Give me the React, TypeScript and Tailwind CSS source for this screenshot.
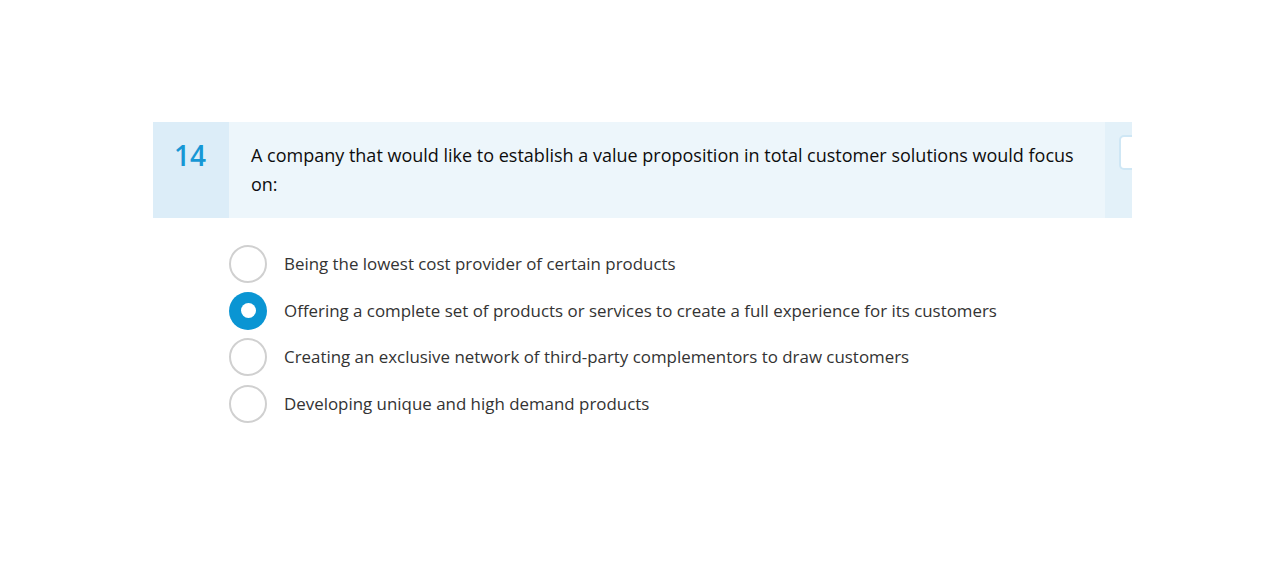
const options = [
  "Being the lowest cost provider of certain products",
  "Offering a complete set of products or services to create a full experience for its customers",
  "Creating an exclusive network of third-party complementors to draw customers",
  "Developing unique and high demand products",
];

export default function App() {
  const selected = 1;

  return (
    <div className="min-h-[588px] w-full bg-white pt-[122px] font-['Open_Sans',sans-serif]">
      <div className="ml-[153px] w-[979px]">
        <div className="flex h-[96px] overflow-hidden">
          <div className="w-[76px] shrink-0 bg-[#dcedf8] pl-[21px] pt-[15px] text-[28px] font-semibold leading-[36px] text-[#1697d5]">
            14
          </div>
          <div className="flex-1 bg-[#edf6fb] pl-[22px] pr-[20px] pt-[19px] text-[18px] leading-[29px] text-[#0d0d0d]">
            A company that would like to establish a value proposition in total customer solutions would focus on:
          </div>
          <div className="w-[27px] shrink-0 bg-[#e3f1f9] pl-[14px] pt-[13px]">
            <div className="h-[35px] w-[40px] rounded-[5px] border-2 border-[#cfe7f5] bg-white" />
          </div>
        </div>

        <div className="flex flex-col gap-[8.5px] pl-[76px] pt-[27px]">
          {options.map((text, i) => (
            <label key={i} className="flex items-center gap-[17px]">
              {i === selected ? (
                <span className="flex h-[38px] w-[38px] items-center justify-center rounded-full bg-[#0a95d3]">
                  <span className="h-[15px] w-[15px] rounded-full bg-white" />
                </span>
              ) : (
                <span className="h-[38px] w-[38px] rounded-full border-2 border-[#d0d0d0] bg-white" />
              )}
              <span className="text-[16.9px] text-[#333]">{text}</span>
            </label>
          ))}
        </div>
      </div>
    </div>
  );
}
